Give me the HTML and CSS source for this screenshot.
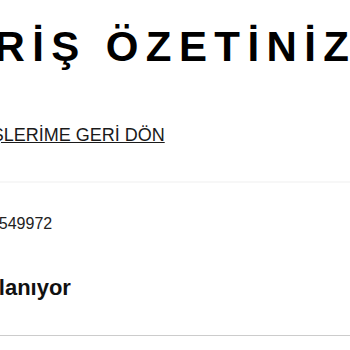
FILE: index.html
```html
<!DOCTYPE html>
<html lang="tr">
<head>
<meta charset="utf-8">
<title>Sipariş Özetiniz</title>
<link rel="stylesheet" href="styles.css">
</head>
<body>
<main class="page">
  <h1 class="title">SİPARİŞ ÖZETİNİZ</h1>
  <div class="back"><a class="back-link" href="#">SİPARİŞLERİME GERİ DÖN</a></div>
  <section class="card">
    <div class="order-no">12549972</div>
    <div class="status">Hazırlanıyor</div>
  </section>
</main>
</body>
</html>
```
FILE: styles.css
```css
html, body {
  margin: 0;
  padding: 0;
  background: #fff;
}
body {
  overflow: hidden;
  font-family: "Liberation Sans", Arial, sans-serif;
  color: #111;
}
.page {
  margin-left: -140px;
  width: 640px;
}
.title {
  margin: 0;
  padding: 23px 0 0 10px;
  font-size: 42px;
  line-height: 48px;
  font-weight: bold;
  letter-spacing: 7.4px;
  color: #000;
  white-space: nowrap;
}
.back {
  margin-top: 54px;
  padding-left: 74px;
  font-size: 18px;
  line-height: 20px;
}
.back-link {
  color: #1a1a1a;
  text-decoration: underline;
}
.card {
  margin-top: 36px;
  border-top: 2px solid #f7f7f7;
  border-bottom: 1px solid #cccccc;
  padding: 32px 0 35px 0;
}
.order-no {
  padding-left: 121px;
  font-size: 16px;
  line-height: 18px;
  color: #222;
}
.status {
  margin-top: 42px;
  padding-left: 85px;
  font-size: 22px;
  line-height: 25px;
  font-weight: bold;
  color: #111;
}
```
